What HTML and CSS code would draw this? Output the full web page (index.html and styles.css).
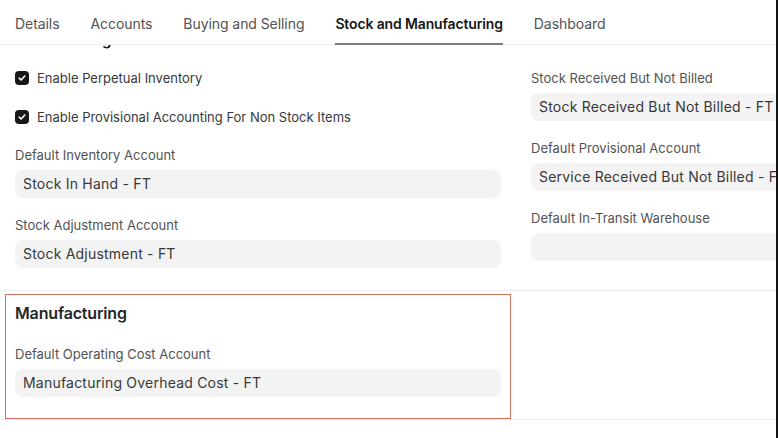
FILE: index.html
```html
<!DOCTYPE html>
<html lang="en">
<head>
<meta charset="utf-8">
<title>Company - Stock and Manufacturing</title>
<link rel="stylesheet" href="styles.css">
</head>
<body>
<div class="viewport">
  <div class="form">
    <nav class="tabs">
      <a class="tab">Details</a>
      <a class="tab">Accounts</a>
      <a class="tab">Buying and Selling</a>
      <a class="tab active">Stock and Manufacturing</a>
      <a class="tab">Dashboard</a>
    </nav>

    <section class="section">
      <div class="clipped-head"><h3 class="section-title">Stock Settings</h3></div>
      <div class="columns">
        <div class="col">
          <label class="check-row">
            <span class="checkbox"><svg viewBox="0 0 14 14" width="14" height="14"><path d="M4.2 7.2 L6.1 9 L9.8 5" fill="none" stroke="#fff" stroke-width="1.6" stroke-linecap="round" stroke-linejoin="round"/></svg></span>
            <span class="check-label">Enable Perpetual Inventory</span>
          </label>
          <label class="check-row">
            <span class="checkbox"><svg viewBox="0 0 14 14" width="14" height="14"><path d="M4.2 7.2 L6.1 9 L9.8 5" fill="none" stroke="#fff" stroke-width="1.6" stroke-linecap="round" stroke-linejoin="round"/></svg></span>
            <span class="check-label">Enable Provisional Accounting For Non Stock Items</span>
          </label>
          <div class="field">
            <div class="label">Default Inventory Account</div>
            <div class="input">Stock In Hand - FT</div>
          </div>
          <div class="field">
            <div class="label">Stock Adjustment Account</div>
            <div class="input">Stock Adjustment - FT</div>
          </div>
        </div>
        <div class="col col-right">
          <div class="field">
            <div class="label">Stock Received But Not Billed</div>
            <div class="input">Stock Received But Not Billed - FT</div>
          </div>
          <div class="field">
            <div class="label">Default Provisional Account</div>
            <div class="input">Service Received But Not Billed - FT</div>
          </div>
          <div class="field">
            <div class="label">Default In-Transit Warehouse</div>
            <div class="input"></div>
          </div>
        </div>
      </div>
    </section>

    <section class="section section-mfg">
      <div class="columns">
        <div class="highlight">
          <h3 class="mfg-title">Manufacturing</h3>
          <div class="field field-last">
            <div class="label">Default Operating Cost Account</div>
            <div class="input">Manufacturing Overhead Cost - FT</div>
          </div>
        </div>
        <div class="col"></div>
      </div>
    </section>
  </div>
</div>
</body>
</html>
```

FILE: styles.css
```css
html, body {
  margin: 0;
  padding: 0;
  background: #ffffff;
}

body {
  font-family: Inter, "Noto Sans", "Liberation Sans", sans-serif;
  color: #383838;
  -webkit-font-smoothing: antialiased;
}

.viewport {
  width: 776px;
  height: 438px;
  overflow: hidden;
  border-right: 2px solid #141414;
}

.form {
  width: 1032px;
}

/* Tabs */
.tabs {
  display: flex;
  height: 44px;
  border-bottom: 1px solid #ededed;
  padding-left: 15px;
  gap: 31px;
  align-items: stretch;
}

.tab {
  display: flex;
  align-items: center;
  font-size: 14px;
  color: #525252;
  letter-spacing: -0.005em;
  padding-top: 4px;
  border-bottom: 2px solid transparent;
  margin-bottom: -1px;
}

.tab.active {
  color: #171717;
  font-weight: 600;
  letter-spacing: -0.01em;
  border-bottom-color: #7c7c7c;
}

/* Sections */
.section {
  border-bottom: 1px solid #ededed;
}

.clipped-head {
  height: 5px;
  overflow: hidden;
  padding-left: 15px;
  margin-bottom: 18px;
}

.section-title {
  margin: -15px 0 0 0;
  font-size: 15px;
  line-height: 20px;
  font-weight: 600;
  color: #171717;
}

.columns {
  display: grid;
  grid-template-columns: 516px 516px;
}

.col {
  padding: 0 15px 4px 15px;
}

.col-right {
  padding-top: 1px;
}

/* Checkbox rows */
.check-row {
  display: flex;
  align-items: center;
  gap: 8px;
  height: 18px;
  margin-bottom: 21px;
  padding-top: 1px;
  box-sizing: border-box;
}

.checkbox {
  width: 14px;
  height: 14px;
  border-radius: 4px;
  background: #171717;
  display: flex;
}

.check-label {
  font-size: 13px;
  color: #383838;
}

/* Fields */
.field {
  margin-bottom: 18px;
}

.label {
  font-size: 13px;
  line-height: 18px;
  height: 18px;
  margin-bottom: 6px;
  color: #525252;
}

.input {
  height: 28px;
  line-height: 28px;
  border-radius: 8px;
  background: #f3f3f3;
  padding: 0 8px;
  font-size: 14px;
  color: #383838;
  letter-spacing: 0.015em;
  white-space: nowrap;
  overflow: hidden;
}

/* Manufacturing section */
.section-mfg {
  padding-top: 3px;
}

.highlight {
  margin: 0 5px;
  border: 1px solid #d9705f;
  padding: 8px 9px 0 9px;
}

.mfg-title {
  margin: 0 0 21px 0;
  font-size: 16px;
  line-height: 21px;
  font-weight: 600;
  letter-spacing: -0.01em;
  color: #262626;
}

.field-last {
  margin-bottom: 21px;
}
```
